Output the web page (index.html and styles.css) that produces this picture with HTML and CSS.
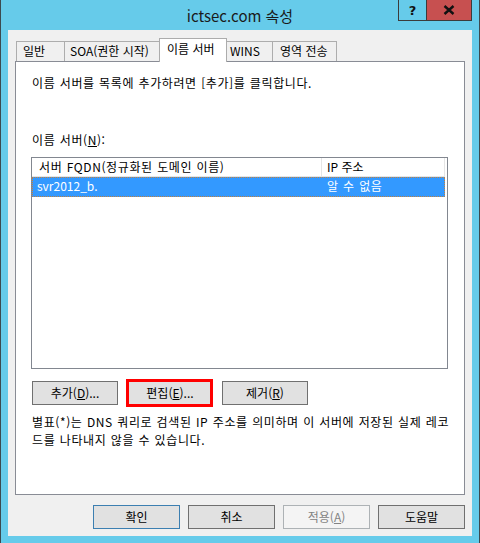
FILE: index.html
```html
<!DOCTYPE html>
<html lang="ko">
<head>
<meta charset="utf-8">
<title>ictsec.com 속성</title>
<link rel="stylesheet" href="styles.css">
</head>
<body>
<div class="window">
  <div class="titlebar">
    <div class="spacer"></div>
    <div class="caption">ictsec.com 속성</div>
    <div class="caption-buttons">
      <div class="cbtn help">?</div>
      <div class="cbtn close">
        <svg width="12" height="10" viewBox="0 0 12 10"><path d="M1.5 1 L10.5 9 M10.5 1 L1.5 9" stroke="#111" stroke-width="2.4" fill="none"/></svg>
      </div>
    </div>
  </div>
  <div class="client">
    <div class="tabs">
      <div class="tab t1">일반</div>
      <div class="tab t2">SOA(권한 시작)</div>
      <div class="tab t3 selected">이름 서버</div>
      <div class="tab t4">WINS</div>
      <div class="tab t5">영역 전송</div>
    </div>
    <div class="panel">
      <p class="intro spaced">이름 서버를 목록에 추가하려면 [추가]를 클릭합니다.</p>
      <p class="label spaced">이름 서버(<u>N</u>):</p>
      <div class="listview">
        <div class="lv-header">
          <div class="col c1 spaced">서버 FQDN(정규화된 도메인 이름)</div>
          <div class="col c2">IP 주소</div>
        </div>
        <div class="lv-row selected">
          <div class="cell c1">svr2012_b.</div>
          <div class="cell c2 spaced">알 수 없음</div>
        </div>
      </div>
      <div class="btn-row">
        <div class="btn">추가(<u>D</u>)...</div>
        <div class="btn highlighted">편집(<u>E</u>)...</div>
        <div class="btn">제거(<u>R</u>)</div>
      </div>
      <p class="note spaced">별표(*)는 DNS 쿼리로 검색된 IP 주소를 의미하며 이 서버에 저장된 실제 레코<br>드를 나타내지 않을 수 있습니다.</p>
    </div>
    <div class="dialog-buttons">
      <div class="btn wide default">확인</div>
      <div class="btn wide">취소</div>
      <div class="btn wide disabled">적용(<u>A</u>)</div>
      <div class="btn wide">도움말</div>
    </div>
  </div>
</div>
</body>
</html>
```
FILE: styles.css
```css
* { box-sizing: border-box; }
html, body { margin: 0; padding: 0; }
body {
  width: 480px;
  height: 543px;
  overflow: hidden;
  font-family: "Noto Sans CJK KR", "Noto Sans", sans-serif;
  font-size: 12px;
  color: #000;
}
.window {
  width: 480px;
  height: 543px;
  background: #66cbea;
  border-left: 1px solid #3c4a50;
  border-right: 1px solid #3c4a50;
  padding: 0 7px 7px 7px;
  display: flex;
  flex-direction: column;
}
.titlebar {
  height: 30px;
  display: grid;
  grid-template-columns: 1fr auto 1fr;
}
.caption {
  font-size: 15px;
  color: #1a1a1a;
  line-height: 30px;
  padding-top: 1px;
}
.caption-buttons {
  justify-self: end;
  display: flex;
  height: 21px;
}
.cbtn {
  height: 21px;
  display: flex;
  align-items: center;
  justify-content: center;
  border: 1px solid #3b3b3b;
  border-top: none;
}
.help {
  width: 28px;
  font-family: "DejaVu Sans", sans-serif;
  font-weight: bold;
  font-size: 13px;
  color: #111;
  border-right: none;
}
.close {
  width: 46px;
  background: #c75050;
}
.client {
  flex: 1;
  background: #f0f0f0;
  padding: 9px 7px 7px 7px;
  display: flex;
  flex-direction: column;
}
.tabs {
  display: flex;
  align-items: flex-end;
  height: 22px;
  padding-left: 1px;
  position: relative;
  z-index: 1;
}
.tab {
  height: 20px;
  border: 1px solid #adadad;
  border-bottom: none;
  background: #f0f0f0;
  line-height: 18px;
  padding-left: 6px;
  margin-left: -1px;
  white-space: nowrap;
}
.tab.t1 { margin-left: 0; width: 49px; }
.tab.t2 { width: 98px; padding-left: 5px; }
.tab.t3 { width: 68px; }
.tab.t4 { width: 47px; margin-left: -1px; padding-left: 3px; }
.tab.t5 { width: 65px; padding-left: 7px; }
.tab.selected {
  height: 24px;
  margin-left: -3px;
  margin-bottom: -1px;
  background: #fff;
  border-color: #acacac;
  line-height: 20px;
  padding-left: 7px;
  position: relative;
  z-index: 2;
}
.panel {
  height: 434px;
  background: #fff;
  border: 1px solid #898c95;
  padding: 12px 16px 0 15px;
}
p { margin: 0; }
.spaced {
  letter-spacing: 0.6px;
  word-spacing: 0.5px;
}
.intro {
  padding-left: 1px;
  line-height: 18px;
}
.label {
  margin-top: 39px;
  padding-left: 1px;
  line-height: 18px;
}
.listview {
  margin-top: 8px;
  height: 212px;
  border: 1px solid #828790;
  background: #fff;
}
.lv-header {
  display: flex;
  height: 19px;
  border-bottom: 1px solid #e5e5e5;
  width: 413px;
}
.lv-header .col {
  line-height: 17px;
  border-right: 1px solid #e5e5e5;
  white-space: nowrap;
}
.lv-header .c1 { width: 290px; padding-left: 7px; }
.lv-header .c2 { width: 123px; padding-left: 5px; }
.lv-row {
  display: flex;
  height: 20px;
  width: 413px;
  line-height: 18px;
}
.lv-row.selected {
  background: #3399ff;
  color: #fff;
  outline: 1px dotted #c08040;
  outline-offset: -1px;
}
.lv-row .c1 { width: 290px; padding-left: 5px; }
.lv-row .c2 { width: 123px; padding-left: 5px; }
.btn-row {
  display: flex;
  gap: 9px;
  margin-top: 12px;
  padding-left: 1px;
}
.btn {
  width: 86px;
  height: 24px;
  background: #e1e1e1;
  border: 1px solid #707070;
  display: flex;
  align-items: center;
  justify-content: center;
  white-space: nowrap;
  line-height: 1;
  padding-bottom: 1px;
}
.btn.highlighted { position: relative; }
.btn.highlighted::after {
  content: "";
  position: absolute;
  top: -3px;
  bottom: -3px;
  left: -2px;
  right: -1px;
  border: 3px solid #ff0000;
}
.note {
  margin-top: 8px;
  padding-left: 1px;
  line-height: 18px;
  white-space: nowrap;
}
.dialog-buttons {
  display: flex;
  justify-content: flex-end;
  gap: 8px;
  margin-top: 10px;
}
.btn.wide { width: 87px; }
.btn.default { border-color: #3c7fb1; }
.btn.disabled {
  background: #f4f4f4;
  border-color: #adb2b5;
  color: #838383;
}
```
